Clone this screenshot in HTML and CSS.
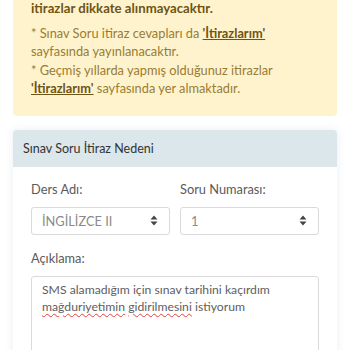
FILE: index.html
```html
<!DOCTYPE html>
<html lang="tr">
<head>
<meta charset="utf-8">
<link rel="stylesheet" href="styles.css">
</head>
<body>
<div class="alert">
  <div class="alert-strong">itirazlar dikkate alınmayacaktır.</div>
  <div class="alert-text">
    <p>* Sınav Soru itiraz cevapları da <a class="alert-link">'İtirazlarım'</a><br>sayfasında yayınlanacaktır.</p>
    <p>* Geçmiş yıllarda yapmış olduğunuz itirazlar<br><a class="alert-link">'İtirazlarım'</a> sayfasında yer almaktadır.</p>
  </div>
</div>

<div class="card">
  <div class="card-header">Sınav Soru İtiraz Nedeni</div>
  <div class="card-body">
    <div class="row">
      <div class="field">
        <div class="label">Ders Adı:</div>
        <div class="select"><span>İNGİLİZCE II</span>
          <svg class="caret" width="8" height="11" viewBox="0 0 8 11"><path d="M4 0.5 L7.5 4.5 H0.5 Z M4 10.5 L7.5 6.5 H0.5 Z" fill="#444"/></svg>
        </div>
      </div>
      <div class="field">
        <div class="label">Soru Numarası:</div>
        <div class="select"><span>1</span>
          <svg class="caret" width="8" height="11" viewBox="0 0 8 11"><path d="M4 0.5 L7.5 4.5 H0.5 Z M4 10.5 L7.5 6.5 H0.5 Z" fill="#444"/></svg>
        </div>
      </div>
    </div>
    <div class="label label-desc">Açıklama:</div>
    <div class="textarea">SMS alamadığım için sınav tarihini kaçırdım<br><span class="typo">mağduriyetimin</span> <span class="typo">gidirilmesini</span> istiyorum</div>
  </div>
</div>
</body>
</html>
```
FILE: styles.css
```css
html, body {
  margin: 0;
  padding: 0;
  background: #ffffff;
  overflow: hidden;
}
body {
  font-family: "Lato", "Open Sans", sans-serif;
  font-size: 12.8px;
  width: 350px;
  height: 350px;
}
.alert {
  margin: -10px 13px 0;
  padding: 10px 18px 18px;
  background: #fff3cd;
  border-radius: 4px;
  color: #987c34;
}
.alert-strong {
  font-weight: 700;
  line-height: 17px;
  color: #6e5415;
  font-size: 13.2px;
}
.alert-text {
  margin-top: 7px;
  line-height: 18.4px;
  font-size: 12.8px;
}
.alert-text p {
  margin: 0;
}
.alert-link {
  font-weight: 700;
  color: #6e5415;
  text-decoration: underline;
}
.card {
  margin: 14px 13px 0;
  border-radius: 4px;
  background: #fff;
  box-shadow: 0 0 10px rgba(40, 70, 100, 0.09);
  overflow: hidden;
}
.card-header {
  background: #dce7eb;
  height: 37px;
  line-height: 37px;
  padding-left: 10px;
  color: #333;
  font-size: 12.5px;
}
.card-body {
  padding: 14px 18px 20px;
}
.row {
  display: flex;
  gap: 10px;
}
.field {
  flex: 1;
}
.label {
  line-height: 16px;
  color: #5a5a5a;
  margin-bottom: 10px;
}
.select {
  height: 28px;
  border: 1px solid #dadada;
  border-radius: 3px;
  box-sizing: border-box;
  display: flex;
  align-items: center;
  justify-content: space-between;
  padding: 0 11px 0 10px;
  color: #8a8a8a;
}
.label-desc {
  margin-top: 15px;
}
.textarea {
  border: 1px solid #dadada;
  border-radius: 3px;
  padding: 4px 10px 0;
  height: 100px;
  line-height: 17px;
  color: #5e5e5e;
  font-size: 12.2px;
}
.typo {
  text-decoration: underline wavy #e04040;
  text-decoration-thickness: 1px;
  text-underline-offset: 2px;
}
```
